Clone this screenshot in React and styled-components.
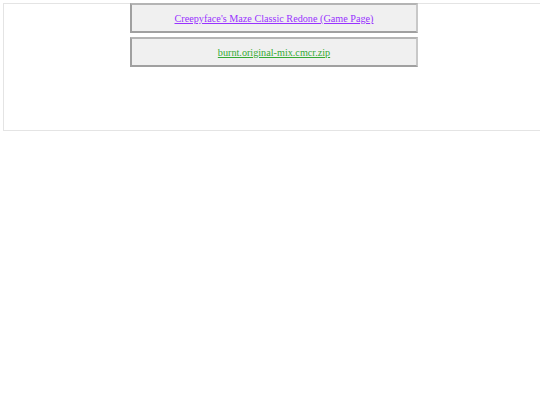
import React from "react";
import styled, { createGlobalStyle } from "styled-components";

const Global = createGlobalStyle`
  html, body { margin: 0; padding: 0; background: #fff; }
  body { font-family: "Liberation Serif", "Times New Roman", serif; overflow: hidden; }
  #root { padding: 3px 0 0 3px; }
`;

const Frame = styled.div`
  width: 541px;
  height: 126px;
  border: 1px solid #e4e4e4;
  display: flex;
  flex-direction: column;
  align-items: center;
  gap: 4px;
`;

const Item = styled.div`
  box-sizing: border-box;
  width: 288px;
  height: 30px;
  margin-top: ${(p) => (p.$first ? "-1px" : "0")};
  margin-right: 1px;
  background: #f0f0f0;
  border-style: solid;
  border-width: 2px;
  border-color: #b4b4b4 #c8c8c8 #a0a0a0 #a0a0a0;
  display: flex;
  align-items: center;
  justify-content: center;
  padding-top: 1px;
  font-family: "Liberation Serif", "Times New Roman", serif;
  font-size: 10.2px;
`;

const Link = styled.a`
  color: ${(p) => p.$color};
  text-decoration: underline;
`;

export default function App() {
  return (
    <>
      <Global />
      <Frame>
        <Item $first>
          <Link href="#" $color="#9933ff">Creepyface's Maze Classic Redone (Game Page)</Link>
        </Item>
        <Item>
          <Link href="#" $color="#33aa33">burnt.original-mix.cmcr.zip</Link>
        </Item>
      </Frame>
    </>
  );
}
